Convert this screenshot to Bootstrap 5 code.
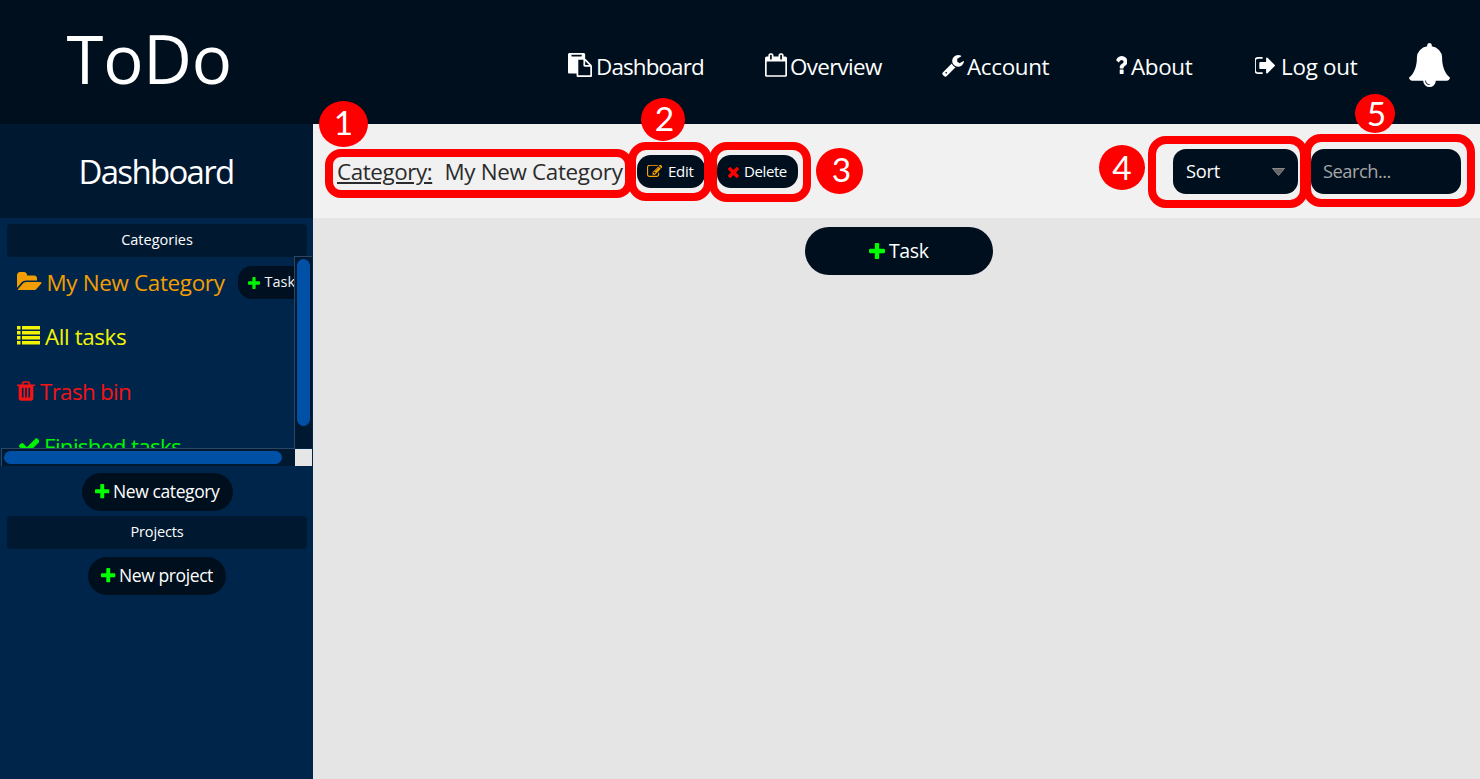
<!DOCTYPE html>
<html lang="en">
<head>
<meta charset="utf-8">
<meta name="viewport" content="width=device-width, initial-scale=1">
<title>ToDo</title>
<link href="https://cdn.jsdelivr.net/npm/bootstrap@5.3.0/dist/css/bootstrap.min.css" rel="stylesheet">
<style>
  body { font-family: "Open Sans", "Noto Sans", sans-serif; background: #e5e5e5; width: 1480px; height: 779px; overflow: hidden; position: relative; line-height: 1; }
  svg { fill: currentColor; flex: none; display: block; }
  .topbar { height: 124px; background: #000f1e; }
  .brand { width: 313px; height: 124px; padding: 0 0 7px 66.5px; font-size: 67px; letter-spacing: -.2px; }
  .mainnav { display: grid; grid-template-columns: 197px 177px 173px 140px 154px 42px; margin-left: 255px; padding-top: 8px; font-size: 22.4px; white-space: nowrap; }
  .mainnav a { color: #fff; text-decoration: none; }
  .mainnav span, .cat-row > span { padding-top: 2px; }
  .side { width: 313px; height: 655px; background: #00254a; }
  .side-title { height: 94px; padding-right: 1px; background: #001830; font-size: 33px; letter-spacing: -1.7px; }
  .section-bar { height: 33px; margin: 0 6px 0 7px; border-radius: 4px; background: #001830; font-size: 14.5px; }
  .cat-box { display: grid; grid-template: 192px 18px / 294px 18px; height: 210px; margin-top: -1px; position: relative; }
  .cat-list { overflow: hidden; padding-left: 17px; font-size: 22.4px; white-space: nowrap; opacity: .95; }
  .cat-row { height: 55px; }
  .cat-row:first-child { height: 53px; }
  .bar-v { background: #001830; border: 1px solid #2b4763; border-width: 1px 0 0 1px; padding: 2px 2px 0; }
  .bar-v div { width: 13px; height: 167px; border-radius: 7px; background: #0050a5; }
  .bar-h { background: #001830; border: 1px solid #2b4763; border-width: 1px 0 0 1px; margin-left: 1px; padding: 2px; width: 294px; }
  .bar-h div { width: 278px; height: 13px; border-radius: 7px; background: #0050a5; }
  .bar-c { background: #e6e6e6; margin: 1px 0 0 1px; height: 17px; }
  .dark { background: #000f1e; color: #fff; }
  .task-sm { width: 78px; height: 33px; border-radius: 14px; padding-left: 10px; font-size: 14.5px; margin-left: 13px; }
  .pill { height: 38px; border-radius: 19px; font-size: 17.5px; white-space: nowrap; padding-left: 13px; }
  .tools { height: 94px; background: #f1f1f1; color: #2b2b2b; padding-left: 24px; white-space: nowrap; }
  .cat-name { font-size: 22.4px; }
  .tool-btn { height: 33px; border-radius: 14px; font-size: 15px; border: 0; }
  .field { height: 45px; border-radius: 13px; font-size: 18.3px; }
  .task-lg { width: 188px; height: 48px; border-radius: 24px; font-size: 19.5px; margin: 9px 0 0 492px; padding-left: 64px; }
  .green { color: #0f0; }
  .note { position: absolute; border: 8px solid #f00; border-radius: 18px; }
  .num { position: absolute; background: #f00; color: #fff; border-radius: 50%; font: 33.5px/1 Lato, "Open Sans", sans-serif; display: flex; align-items: center; justify-content: center; }
  .sp1 { letter-spacing: -.26px; } .sp2 { letter-spacing: -.32px; } .sp3 { letter-spacing: -.4px; }
  .sp5 { letter-spacing: -.68px; } .sp7 { letter-spacing: -.86px; }
</style>
</head>
<body>
<svg width="0" height="0" class="position-absolute">
  <symbol id="plus" viewBox="192 128 1408 1408"><path d="M1600 736v192q0 40-28 68t-68 28h-416v416q0 40-28 68t-68 28h-192q-40 0-68-28t-28-68v-416h-416q-40 0-68-28t-28-68v-192q0-40 28-68t68-28h416v-416q0-40 28-68t68-28h192q40 0 68 28t28 68v416h416q40 0 68 28t28 68z"/></symbol>
</svg>

<header class="topbar d-flex text-white">
  <div class="brand d-flex align-items-center">ToDo</div>
  <nav class="mainnav align-items-center">
    <a href="#" class="d-flex align-items-center"><svg width="24" height="24" viewBox="0 0 1792 1792" style="margin:-2px 4px 0 0"><path d="M768 1664h896v-640h-416q-40 0-68-28t-28-68v-416h-384v1152zm256-1440v-64q0-13-9.5-22.5t-22.5-9.5h-704q-13 0-22.5 9.5t-9.5 22.5v64q0 13 9.5 22.5t22.5 9.5h704q13 0 22.5-9.5t9.5-22.5zm256 672h299l-299-299v299zm512 128v672q0 40-28 68t-68 28h-960q-40 0-68-28t-28-68v-160h-544q-40 0-68-28t-28-68v-1344q0-40 28-68t68-28h1088q40 0 68 28t28 68v328q21 13 36 28l408 408q28 28 48 76t20 88z"/></svg><span class="sp7">Dashboard</span></a>
    <a href="#" class="d-flex align-items-center"><svg width="22" height="24" viewBox="64 0 1664 1792" style="margin:-2px 3px 0 0"><path d="M192 1664h1408v-1024h-1408v1024zm384-1216v-288q0-14-9-23t-23-9h-64q-14 0-23 9t-9 23v288q0 14 9 23t23 9h64q14 0 23-9t9-23zm768 0v-288q0-14-9-23t-23-9h-64q-14 0-23 9t-9 23v288q0 14 9 23t23 9h64q14 0 23-9t9-23zm384-64v1280q0 52-38 90t-90 38h-1408q-52 0-90-38t-38-90v-1280q0-52 38-90t90-38h128v-96q0-66 47-113t113-47h64q66 0 113 47t47 113v96h384v-96q0-66 47-113t113-47h64q66 0 113 47t47 113v96h128q52 0 90 38t38 90z"/></svg><span class="sp5">Overview</span></a>
    <a href="#" class="d-flex align-items-center"><svg width="22" height="22" viewBox="64 128 1664 1664" style="margin:-1px 3px 0 0"><path d="M448 1472q0-26-19-45t-45-19-45 19-19 45 19 45 45 19 45-19 19-45zm644-420l-682 682q-37 37-90 37-52 0-91-37l-106-108q-38-36-38-90 0-53 38-91l681-681q39 98 114.500 173.500t173.500 114.500zm634-435q0 39-23 106-47 134-164.500 217.500t-258.500 83.500q-185 0-316.500-131.500t-131.500-316.500 131.500-316.500 316.500-131.500q58 0 121.500 16.500t107.500 46.500q16 11 16 28t-16 28l-293 169v224l193 107q5-3 79-48.500t135.500-81 70.500-35.500q15 0 23.500 10t8.500 25z"/></svg><span class="sp2">Account</span></a>
    <a href="#" class="d-flex align-items-center"><svg width="12.500" height="18" viewBox="380 256 1030 1280" preserveAspectRatio="none" style="margin:-3px 4px 0 -.5px"><path d="M1088 1256v240q0 16-12 28t-28 12h-240q-16 0-28-12t-12-28v-240q0-16 12-28t28-12h240q16 0 28 12t12 28zm316-600q0 54-15.500 101t-35 76.500-55 59.500-57.500 43.500-61 35.500q-41 23-68.500 65t-27.500 67q0 17-12 32.500t-28 15.500h-240q-15 0-25.500-18.500t-10.500-37.500v-45q0-83 65-156.500t143-108.500q59-27 84-56t25-76q0-42-46.500-74t-107.500-32q-65 0-108 29-35 25-107 115-13 16-31 16-12 0-25-8l-164-125q-13-10-15.500-25t5.500-28q160-266 464-266 80 0 161 31t146 83 106 127.500 41 158.500z"/></svg><span class="sp2">About</span></a>
    <a href="#" class="d-flex align-items-center"><svg width="20.500" height="17" viewBox="160 256 1472 1280" style="margin:-2px 5.500px 0 0"><path d="M704 1440q0 4 1 20t.5 26.500-3 23.500-10 19.500-20.500 6.500h-320q-119 0-203.500-84.500t-84.500-203.500v-704q0-119 84.500-203.500t203.500-84.500h320q13 0 22.500 9.500t9.500 22.500q0 4 1 20t.5 26.500-3 23.500-10 19.500-20.500 6.500h-320q-66 0-113 47t-47 113v704q0 66 47 113t113 47h312l11.500 1 11.500 3 8 5.500 7 9 2 13.500zm928-544q0 26-19 45l-544 544q-19 19-45 19t-45-19-19-45v-288h-448q-26 0-45-19t-19-45v-384q0-26 19-45t45-19h448v-288q0-26 19-45t45-19 45 19l544 544q19 19 19 45z"/></svg><span class="sp1">Log out</span></a>
    <a href="#"><svg width="41" height="44" viewBox="64 0 1664 1792" style="margin-top:-3px"><path d="M912 1696q0-16-16-16-59 0-101.500-42.500t-42.500-101.500q0-16-16-16t-16 16q0 73 51.500 124.500t124.500 51.500q16 0 16-16zm816-288q0 52-38 90t-90 38h-448q0 106-75 181t-181 75-181-75-75-181h-448q-52 0-90-38t-38-90q50-42 91-88t85-119.500 74.500-158.500 50-206 19.500-260q0-152 117-282.500t307-158.500q-8-19-8-39 0-40 28-68t68-28 68 28 28 68q0 20-8 39 190 28 307 158.500t117 282.500q0 139 19.500 260t50 206 74.500 158.500 85 119.500 91 88z"/></svg></a>
  </nav>
</header>

<div class="d-flex">
  <aside class="side text-white">
    <div class="side-title d-flex align-items-center justify-content-center">Dashboard</div>
    <div class="section-bar d-flex align-items-center justify-content-center" style="margin-top:6px">Categories</div>
    <div class="cat-box">
      <div class="cat-list">
        <div class="cat-row d-flex align-items-center" style="color:#ffa500"><svg width="24.500" height="18.500" viewBox="0 128 1879 1408" style="margin:-3px 5px 0 0"><path d="M1879 952q0 31-31 66l-336 396q-43 51-120.500 86.500t-143.500 35.500h-1088q-34 0-60.500-13t-26.500-43q0-31 31-66l336-396q43-51 120.500-86.500t143.500-35.500h1088q34 0 60.500 13t26.500 43zm-343-344v160h-832q-94 0-197 47.500t-164 119.500l-337 396-5 6q0-4-.5-12.500t-.5-12.500v-960q0-92 66-158t158-66h320q92 0 158 66t66 158v32h544q92 0 158 66t66 158z"/></svg><span class="sp2">My New Category</span>
          <div class="task-sm dark d-flex align-items-center flex-shrink-0"><svg class="green" width="12" height="12" style="margin-right:5px"><use href="#plus"/></svg><span>Task</span></div></div>
        <div class="cat-row d-flex align-items-center" style="color:#ff0"><svg width="23" height="19" viewBox="0 0 23 19" style="margin:-3px 5px 0 0"><path d="M0 0h3.500v3.500H0zM5 0h18v3.500H5zM0 5h3.500v3.500H0zM5 5h18v3.500H5zM0 10h3.500v3.500H0zM5 10h18v3.500H5zM0 15h3.500v3.500H0zM5 15h18v3.500H5z"/></svg><span class="sp3">All tasks</span></div>
        <div class="cat-row d-flex align-items-center" style="color:#ff1414"><svg width="18" height="20" viewBox="192 128 1408 1536" style="margin:-2px 5px 0 0"><path d="M704 1376v-704q0-14-9-23t-23-9h-64q-14 0-23 9t-9 23v704q0 14 9 23t23 9h64q14 0 23-9t9-23zm256 0v-704q0-14-9-23t-23-9h-64q-14 0-23 9t-9 23v704q0 14 9 23t23 9h64q14 0 23-9t9-23zm256 0v-704q0-14-9-23t-23-9h-64q-14 0-23 9t-9 23v704q0 14 9 23t23 9h64q14 0 23-9t9-23zm-544-992h448l-48-117q-7-9-17-11h-317q-10 2-17 11zm928 32v64q0 14-9 23t-23 9h-96v948q0 83-47 143.500t-113 60.500h-832q-66 0-113-58.500t-47-141.500v-952h-96q-14 0-23-9t-9-23v-64q0-14 9-23t23-9h309l70-167q15-37 54-63t79-26h320q40 0 79 26t54 63l70 167h309q14 0 23 9t9 23z"/></svg><span class="sp5">Trash bin</span></div>
        <div class="cat-row d-flex align-items-center green"><svg width="20.500" height="16" viewBox="121 334 1550 1188" style="margin:-2px 5px 0 1.500px"><path d="M1671 566q0 40-28 68l-724 724-136 136q-28 28-68 28t-68-28l-136-136-362-362q-28-28-28-68t28-68l136-136q28-28 68-28t68 28l294 295 656-657q28-28 68-28t68 28l136 136q28 28 28 68z"/></svg><span class="sp5">Finished tasks</span></div>
      </div>
      <div class="bar-v"><div></div></div>
      <div class="bar-h"><div></div></div>
      <div class="bar-c"></div>
    </div>
    <div class="pill dark d-flex align-items-center" style="width:151px;margin:7px 0 5px 82px"><svg class="green" width="14.500" height="14.500" style="margin:-1px 3.500px 0 0"><use href="#plus"/></svg><span class="sp3">New category</span></div>
    <div class="section-bar d-flex align-items-center justify-content-center" style="letter-spacing:-.14px">Projects</div>
    <div class="pill dark d-flex align-items-center" style="width:138px;margin:8px 0 0 88px"><svg class="green" width="14.500" height="14.500" style="margin:-1px 3.500px 0 0"><use href="#plus"/></svg><span class="sp3">New project</span></div>
  </aside>

  <main class="flex-grow-1">
    <div class="tools d-flex align-items-center">
      <div class="cat-name d-flex sp2" style="width:299.500px;margin-top:3px"><span style="width:107.500px"><span class="text-decoration-underline" style="letter-spacing:-.42px">Category:</span></span><span>My New Category</span></div>
      <button class="tool-btn dark d-flex align-items-center p-0" style="width:68px"><svg width="15.500" height="13" viewBox="0 160 1792 1504" style="margin:1px 6px 0 10px;color:#ffa500"><path d="M888 1184l116-116-152-152-116 116v56h96v96h56zm440-720q-16-16-33 1l-350 350q-17 17-1 33t33-1l350-350q17-17 1-33zm80 594v190q0 119-84.500 203.500t-203.500 84.500h-832q-119 0-203.500-84.500t-84.500-203.500v-832q0-119 84.500-203.500t203.500-84.500h832q63 0 117 25 15 7 18 23 3 17-9 29l-49 49q-14 14-32 8-23-6-45-6h-832q-66 0-113 47t-47 113v832q0 66 47 113t113 47h832q66 0 113-47t47-113v-126q0-13 9-22l64-64q15-15 35-7t20 29zm-96-738l288 288-672 672h-288v-288zm444 132l-92 92-288-288 92-92q28-28 68-28t68 28l152 152q28 28 28 68t-28 68z"/></svg><span class="sp1">Edit</span></button>
      <button class="tool-btn dark d-flex align-items-center p-0" style="width:80.500px;margin-left:12.500px"><svg width="11" height="11" viewBox="302 238 1188 1188" style="margin:3px 5px 0 11px;color:#f00"><path d="M1490 1322q0 40-28 68l-136 136q-28 28-68 28t-68-28l-294-294-294 294q-28 28-68 28t-68-28l-136-136q-28-28-28-68t28-68l294-294-294-294q-28-28-28-68t28-68l136-136q28-28 68-28t68 28l294 294 294-294q28-28 68-28t68 28l136 136q28 28 28 68t-28 68l-294 294 294 294q28 28 28 68z" transform="translate(0 -128)"/></svg><span class="sp3">Delete</span></button>
      <div class="field dark d-flex align-items-center justify-content-between sp1" style="width:125px;margin-left:auto;padding:0 13px 0 13px"><span>Sort</span><svg width="13" height="8" viewBox="0 0 13 8" style="margin-top:1px"><path d="M.5.5h12L6.500 7.500z" fill="#666" stroke="#888"/></svg></div>
      <div class="field dark d-flex align-items-center" style="width:150px;margin:0 19px 0 13px;padding-left:12px;color:#a6a6a6;letter-spacing:-.5px">Search...</div>
    </div>
    <div class="task-lg dark d-flex align-items-center"><svg class="green" width="16" height="16" style="margin:-1px 4px 0 0"><use href="#plus"/></svg><span class="sp3">Task</span></div>
  </main>
</div>

<div class="note" style="left:325px;top:149px;width:308px;height:49px;border-radius:16px"></div>
<div class="note" style="left:628px;top:142px;width:84px;height:59px"></div>
<div class="note" style="left:709px;top:142px;width:102px;height:60px"></div>
<div class="note" style="left:1148px;top:136px;width:160px;height:72px"></div>
<div class="note" style="left:1303px;top:134px;width:172px;height:73px"></div>
<div class="num" style="left:319px;top:101px;width:49px;height:46px;padding-bottom:2px">1</div>
<div class="num" style="left:641px;top:98px;width:44px;height:43px;padding:0 0 2px 3px">2</div>
<div class="num" style="left:816px;top:148px;width:47px;height:46px;padding:0 0 2px 4px">3</div>
<div class="num" style="left:1099px;top:145px;width:46px;height:45px">4</div>
<div class="num" style="left:1355px;top:94px;width:40px;height:39px;padding:1px 0 0 3px">5</div>
<script src="https://cdn.jsdelivr.net/npm/bootstrap@5.3.0/dist/js/bootstrap.bundle.min.js"></script>
</body>
</html>
